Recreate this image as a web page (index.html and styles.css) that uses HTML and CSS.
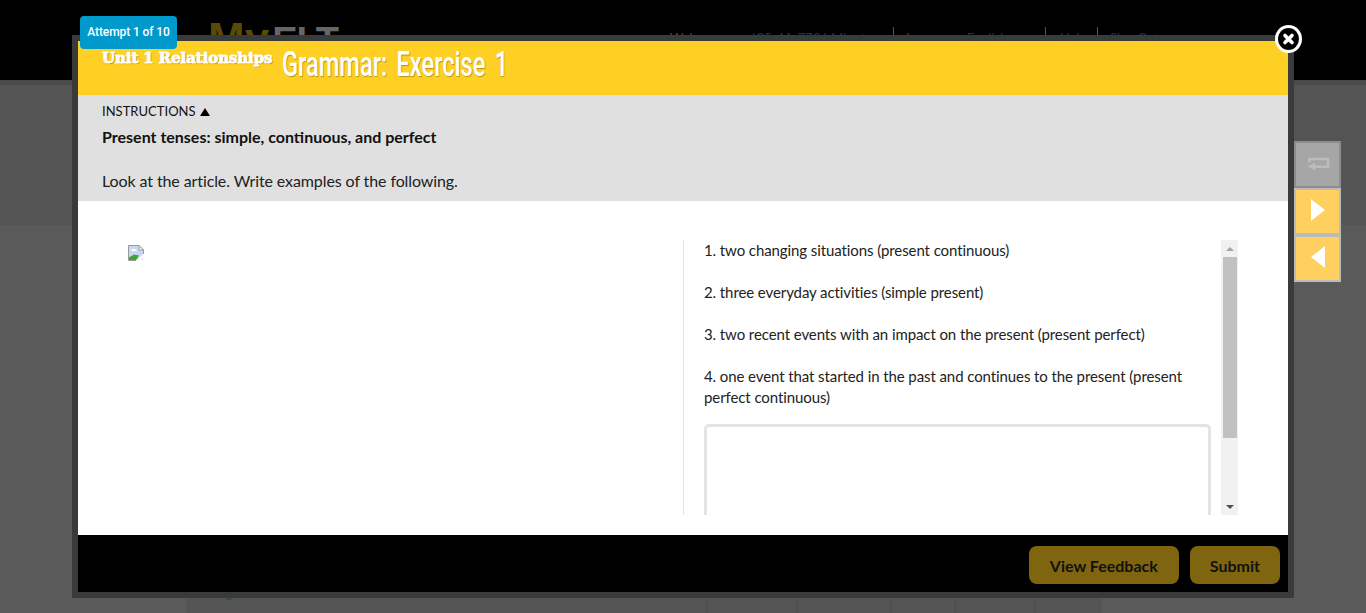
FILE: index.html
```html
<!DOCTYPE html>
<html>
    <head>
        <title>Grammar: Exercise 1</title>
        <link rel="stylesheet" href="styles.css">
    </head>
    <body>
        <div class="topbar">
            <div class="logo"><span class="logo-my">My</span><span class="logo-elt">ELT</span></div>
            <div class="usernav">
                <span class="nav-item nav-welcome">Welcome, <a>IC5-4A-7706 Minoto</a></span>
                <span class="nav-item nav-lang">Language: <a>English</a><span class="nav-flag"></span></span>
                <span class="nav-item nav-help"><a>Help</a></span>
                <span class="nav-item"><a>Sign Out</a></span>
            </div>
        </div>
        <div class="subbar"></div>
        <div class="page-bg"></div>
        <div class="page-table">
            <div class="page-cell"><a class="page-link">g</a></div>
            <div class="page-cell"></div>
            <div class="page-cell"></div>
            <div class="page-cell"></div>
            <div class="page-cell"></div>
            <div class="page-cell"></div>
        </div>

        <div class="modal">
            <div class="attempt">Attempt 1 of 10</div>
            <div class="close">
                <svg width="27" height="28" viewBox="0 0 27 28">
                    <ellipse cx="13.5" cy="14" rx="13.5" ry="14" fill="#fff"/>
                    <ellipse cx="13.5" cy="14" rx="10.5" ry="11" fill="#000"/>
                    <path d="M10 10.5 L17 17.5 M17 10.5 L10 17.5" stroke="#fff" stroke-width="3.6" stroke-linecap="round"/>
                </svg>
            </div>
            <div class="modal-head">
                <span class="unit">Unit 1 Relationships</span>
                <span class="title">Grammar: Exercise 1</span>
            </div>
            <div class="instructions">
                <div class="instr-toggle">INSTRUCTIONS <span class="up-arrow"></span></div>
                <div class="instr-title">Present tenses: simple, continuous, and perfect</div>
                <div class="instr-text">Look at the article. Write examples of the following.</div>
            </div>
            <div class="modal-body">
                <div class="col-left">
                    <svg class="broken" width="16" height="16" viewBox="0 0 16 16">
                        <path d="M1 1 H11 L15 5 V15 H1 Z" fill="#c9d7f2"/>
                        <path d="M3 5.5 Q5 2.5 7.5 4.5 L9 6 H3 Z" fill="#fff"/>
                        <path d="M1 15 V12.5 L6 9.5 L11 10.5 L8 15 Z" fill="#3fa535"/>
                        <path d="M9.5 16.5 L16.5 9.5" stroke="#fff" stroke-width="2.5"/>
                        <path d="M8 15.5 H0.5 V0.5 H11 L15.5 5 V9" fill="none" stroke="#9a9a9a"/>
                        <path d="M11 0.5 V5 H15.5 Z" fill="#fff" stroke="#9a9a9a"/>
                    </svg>
                </div>
                <div class="col-right">
                    <div class="questions">
                        <p>1. two changing situations (present continuous)</p>
                        <p>2. three everyday activities (simple present)</p>
                        <p>3. two recent events with an impact on the present (present perfect)</p>
                        <p>4. one event that started in the past and continues to the present (present perfect continuous)</p>
                        <div class="answer"></div>
                    </div>
                    <div class="scrollbar">
                        <span class="scroll-up"></span>
                        <div class="scroll-track"><div class="scroll-thumb"></div></div>
                        <span class="scroll-down"></span>
                    </div>
                </div>
            </div>
            <div class="modal-foot">
                <button class="btn btn-wide">View Feedback</button>
                <button class="btn">Submit</button>
            </div>
        </div>

        <div class="sidebtns">
            <div class="sidebtn sidebtn-off">
                <svg width="24" height="16" viewBox="0 0 24 16">
                    <path d="M3.5 4.5 V2 H22 V9.8 H8" fill="none" stroke="#bcbcbc" stroke-width="2.6" stroke-linejoin="round" stroke-linecap="round"/>
                    <path d="M9 5.5 L1.5 9.6 L9 13.5 Z" fill="#bcbcbc"/>
                </svg>
            </div>
            <div class="sidebtn sidebtn-arrow">
                <svg width="14" height="22" viewBox="0 0 14 22"><path d="M0 0 L14 11 L0 22 Z" fill="#fff"/></svg>
            </div>
            <div class="sidebtn sidebtn-arrow">
                <svg width="14" height="22" viewBox="0 0 14 22"><path d="M14 0 L0 11 L14 22 Z" fill="#fff"/></svg>
            </div>
        </div>
    </body>
</html>
```

FILE: styles.css
```css
html, body {
    height: 100%;
}
body {
    margin: 0;
    background-color: #5a5a5a;
    font-family: Lato, "Liberation Sans", sans-serif;
    overflow: hidden;
}
.topbar {
    height: 80px;
    background-color: #000;
    display: flex;
    justify-content: space-between;
    padding: 0 0 0 208px;
    box-sizing: border-box;
}
.logo {
    display: flex;
    align-items: flex-start;
    height: 18px;
    margin-top: 30px;
    font-family: "Liberation Sans", sans-serif;
    font-weight: bold;
    line-height: 18px;
}
.logo-my {
    color: #5a4a08;
    font-size: 44px;
    margin-right: 3px;
}
.logo-elt {
    color: #666;
    font-size: 38px;
    letter-spacing: -1px;
    margin-top: 2px;
}
.usernav {
    display: flex;
    width: 696px;
    height: 30px;
    margin-top: 27px;
    font-size: 13px;
    color: #4a4a4a;
}
.usernav a {
    color: #0e3c55;
}
.nav-item {
    box-sizing: border-box;
    padding: 2px 12px 0;
    border-left: 1px solid #555;
    line-height: 18px;
    white-space: nowrap;
}
.nav-welcome {
    width: 223px;
    border-left: none;
    padding-left: 0;
}
.nav-welcome a {
    margin-left: 22px;
}
.nav-lang {
    width: 152px;
}
.nav-help {
    width: 52px;
    padding-left: 14px;
}
.nav-flag {
    display: inline-block;
    width: 11px;
    height: 8px;
    margin-left: 5px;
    background-color: #0e3c55;
}
.subbar {
    height: 5px;
    background-color: #4a4a4a;
}
.page-bg {
    height: 140px;
    background-color: #545454;
}
.page-table {
    display: grid;
    grid-template-columns: 521px 91px 93px 65px 79px 67px;
    width: 916px;
    height: 388px;
    margin-left: 186px;
    background-color: #545454;
}
.page-cell {
    display: flex;
    align-items: flex-end;
    box-sizing: border-box;
    padding: 0 0 13px 39px;
    border-right: 1px solid #4c4c4c;
}
.page-cell:last-child {
    border-right: none;
}
.page-link {
    color: #174a68;
    font-size: 15px;
    line-height: 18px;
}
.modal {
    position: absolute;
    left: 72px;
    top: 35px;
    width: 1210px;
    height: 551px;
    border: 6px solid #3a3a3a;
    display: flex;
    flex-direction: column;
}
.attempt {
    position: absolute;
    left: 2px;
    top: -25px;
    width: 97px;
    height: 33px;
    background-color: #0099cc;
    border-radius: 4px;
    color: #fff;
    font-family: Roboto, sans-serif;
    font-size: 12px;
    font-weight: 500;
    letter-spacing: -0.1px;
    line-height: 32px;
    text-align: center;
}
.close {
    position: absolute;
    left: 1197px;
    top: -16px;
    width: 27px;
    height: 28px;
}
.modal-head {
    height: 54px;
    background-color: #ffd024;
    color: #fff;
    display: flex;
    flex: none;
    padding-left: 24px;
}
.unit {
    font-family: "DejaVu Serif", serif;
    font-weight: bold;
    font-size: 15px;
    line-height: 34px;
    letter-spacing: -0.1px;
    -webkit-text-stroke: 0.8px #fff;
    text-shadow: 1px 1px 1px rgba(120, 90, 0, 0.6);
    height: 34px;
    width: 180px;
    flex: none;
    white-space: nowrap;
}
.title {
    font-family: Roboto, sans-serif;
    font-size: 35px;
    font-weight: 500;
    line-height: 48px;
    word-spacing: 5px;
    transform: scaleX(0.675);
    transform-origin: left center;
    text-shadow: 1px 1px 1px rgba(120, 90, 0, 0.5);
    white-space: nowrap;
}
.instructions {
    height: 106px;
    flex: none;
    box-sizing: border-box;
    background-color: #e0e0e0;
    padding: 8px 24px 0;
    color: #111;
}
.instr-toggle {
    font-size: 13px;
    letter-spacing: 0.02px;
    line-height: 17px;
    display: flex;
    align-items: center;
    gap: 4px;
}
.up-arrow {
    width: 0;
    height: 0;
    border-left: 5px solid transparent;
    border-right: 5px solid transparent;
    border-bottom: 8px solid #000;
}
.instr-title {
    font-size: 16px;
    font-weight: bold;
    line-height: 18px;
    margin-top: 8px;
}
.instr-text {
    font-size: 16px;
    letter-spacing: -0.1px;
    line-height: 20px;
    color: #222;
    margin-top: 25px;
}
.modal-body {
    flex: 1;
    background-color: #fff;
    display: flex;
    padding: 39px 50px 20px;
    min-height: 0;
}
.col-left {
    width: 556px;
    flex: none;
    padding-top: 5px;
    box-sizing: border-box;
    border-right: 1px solid #e3e3e3;
}
.broken {
    display: block;
}
.col-right {
    flex: 1;
    display: flex;
    min-width: 0;
    padding-left: 20px;
}
.questions {
    flex: 1;
    overflow: hidden;
    font-size: 15px;
    letter-spacing: -0.09px;
    line-height: 21px;
    color: #222;
}
.questions p {
    margin: 0 0 21px;
}
.answer {
    height: 120px;
    box-sizing: border-box;
    border: 3px solid #e3e3e3;
    border-radius: 5px;
    margin-top: -5px;
}
.scrollbar {
    width: 17px;
    flex: none;
    margin-left: 10px;
    background-color: #f1f1f1;
    display: flex;
    flex-direction: column;
    align-items: center;
}
.scroll-up, .scroll-down {
    width: 0;
    height: 0;
    flex: none;
    border-left: 4px solid transparent;
    border-right: 4px solid transparent;
}
.scroll-up {
    border-bottom: 4px solid #a3a3a3;
    margin: 7px 0 6px;
}
.scroll-down {
    border-top: 4px solid #505050;
    margin: 6px 0;
}
.scroll-track {
    flex: 1;
    width: 14px;
}
.scroll-thumb {
    height: 181px;
    background-color: #c1c1c1;
}
.modal-foot {
    height: 57px;
    flex: none;
    background-color: #000;
    display: flex;
    justify-content: flex-end;
    gap: 11px;
    padding: 11px 8px 0;
    box-sizing: border-box;
}
.btn {
    height: 38px;
    padding: 0 20px;
    border: none;
    border-radius: 8px;
    background-color: #7f6510;
    color: #111;
    font-family: Lato, sans-serif;
    font-size: 16px;
    font-weight: bold;
}
.btn-wide {
    min-width: 150px;
}
.sidebtns {
    position: absolute;
    left: 1294px;
    top: 141px;
    display: flex;
    flex-direction: column;
}
.sidebtn {
    width: 47px;
    height: 47px;
    box-sizing: border-box;
    border: 2px solid #bbb;
    background-color: #ffcf5f;
    display: flex;
    align-items: center;
    justify-content: center;
}
.sidebtn-off {
    background-color: #a6a6a6;
    border-color: #8c8c8c;
}
.sidebtn-arrow {
    padding-bottom: 3px;
}
```
